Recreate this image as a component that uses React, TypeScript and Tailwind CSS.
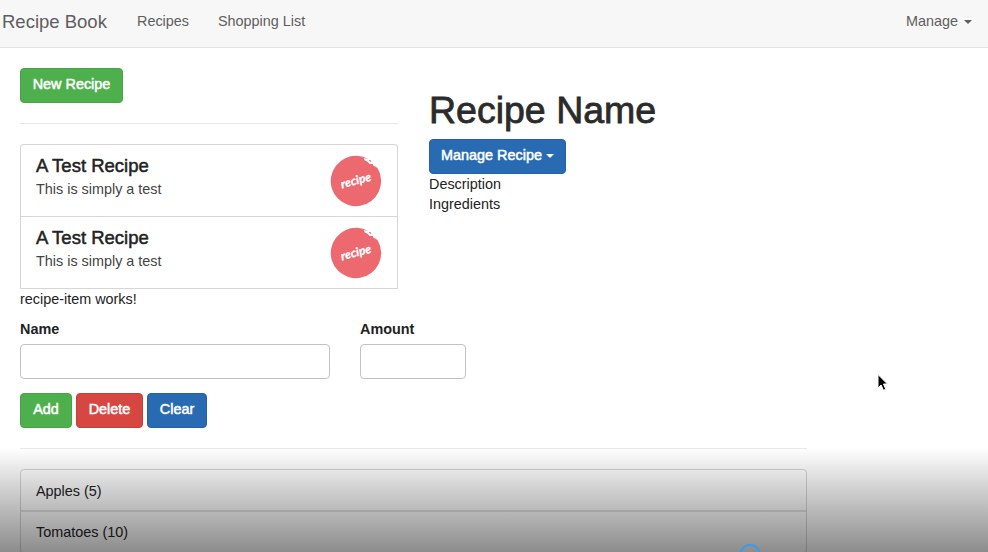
import React from "react";

function Caret({ className = "" }: { className?: string }) {
  return (
    <span
      className={`inline-block h-0 w-0 border-x-4 border-t-4 border-x-transparent border-t-current ${className}`}
    />
  );
}

function Button({ className = "", children }: { className?: string; children: React.ReactNode }) {
  return (
    <button
      className={`flex h-[35px] items-center justify-center rounded border pb-px text-[14.4px] text-white [-webkit-text-stroke:0.5px_white] ${className}`}
    >
      {children}
    </button>
  );
}

function RecipeLogo() {
  return (
    <svg className="mt-2.5 mr-[15px] h-[52px] w-[52px] shrink-0" viewBox="0 0 52 52">
      <path
        d="M38.5 4.2 A25.2 25.2 0 1 0 47.8 13.5 L45.8 11.8 L43.6 11 L42.7 9 L39.7 8.9 L37.5 6.7 L34.5 5.2 L34 3 Z"
        fill="#ed6970"
      />
      <path d="M39.3 5.2l1.8 1.3" stroke="#ed6970" strokeWidth="1.4" />
      <text
        x="26"
        y="29.5"
        textAnchor="middle"
        transform="rotate(-15 26 26)"
        fill="white"
        stroke="white"
        strokeWidth="0.3"
        fontFamily="Lato, sans-serif"
        fontStyle="italic"
        fontWeight="700"
        fontSize="12"
        textLength="31"
      >
        recipe
      </text>
    </svg>
  );
}

function RecipeItem() {
  return (
    <a className="flex h-[72px] justify-between border-b border-[#d6d6d6] pl-[15px]">
      <div className="pt-[9px]">
        <h4 className="text-[18.5px] leading-[24px] text-[#222] [-webkit-text-stroke:0.5px_#222]">A Test Recipe</h4>
        <p className="mt-px text-[14.4px] leading-[21px] text-[#444]">This is simply a test</p>
      </div>
      <RecipeLogo />
    </a>
  );
}

export default function App() {
  return (
    <div className="relative h-[552px] w-[988px] overflow-hidden bg-white font-['Liberation_Sans',Arial,sans-serif] text-[14.4px] text-[#222]">
      <nav className="flex h-12 items-center border-b border-[#e3e3e3] bg-[#f7f7f7] pb-[3px] text-[#5e5e5e]">
        <span className="ml-[2px] w-[135px] text-[18.5px]">Recipe Book</span>
        <span className="w-[81px]">Recipes</span>
        <span>Shopping List</span>
        <span className="mr-4 ml-auto flex items-center">
          Manage
          <Caret className="ml-1.5" />
        </span>
      </nav>

      <main className="flex pl-5">
        <section className="w-[378px] pt-5">
          <Button className="w-[103px] border-[#47a447] bg-[#4eb04c]">New Recipe</Button>
          <hr className="mt-5 mb-5 border-[#e8e8e8]" />
          <div className="rounded-t border border-b-0 border-[#d6d6d6]">
            <RecipeItem />
            <RecipeItem />
          </div>
          <p className="leading-[20px]">recipe-item works!</p>
        </section>
        <section className="ml-[31px] pt-[41px]">
          <h1 className="text-[37.5px] leading-[42px] text-[#2b2b2b] [-webkit-text-stroke:0.8px_#2b2b2b]">Recipe Name</h1>
          <Button className="mt-2 w-[137px] border-[#2561a3] bg-[#286bb3]">
            Manage Recipe
            <Caret className="ml-1" />
          </Button>
          <p className="leading-[20px]">Description</p>
          <p className="leading-[20px]">Ingredients</p>
        </section>
      </main>

      <form className="ml-5 w-[787px] pt-2.5">
        <div className="flex gap-[30px] font-bold">
          <label className="block w-[310px] leading-[20px]">
            Name
            <input className="mt-[5px] block h-[35px] w-full rounded border border-[#c2c2c2] bg-white" />
          </label>
          <label className="block w-[106px] leading-[20px]">
            Amount
            <input className="mt-[5px] block h-[35px] w-full rounded border border-[#c2c2c2] bg-white" />
          </label>
        </div>
        <div className="mt-[14px] flex gap-1">
          <Button className="w-[52px] border-[#47a447] bg-[#4eb04c]">Add</Button>
          <Button className="w-[67px] border-[#c4403c] bg-[#d64742]">Delete</Button>
          <Button className="w-[60px] border-[#2561a3] bg-[#286bb3]">Clear</Button>
        </div>
        <hr className="mt-5 mb-5 border-[#e8e8e8]" />
        <ul className="rounded border border-[#d6d6d6]">
          <li className="h-[42px] border-b-2 border-[#e2e2e2] pl-[15px] leading-[42px]">Apples (5)</li>
          <li className="h-[41px] pl-[15px] leading-[41px]">Tomatoes (10)</li>
        </ul>
      </form>

      <div className="absolute inset-x-0 bottom-0 h-[104px] bg-linear-to-b from-black/0 via-black/23 to-black/45" />
      <div className="absolute top-[544px] left-[739px] h-[22px] w-[22px] rounded-full border-2 border-[#3f9ae5]" />
      <svg className="absolute top-[373px] left-[876px] h-[19px] w-[13px]" viewBox="0 0 13 19">
        <path
          d="M2 1.5V15L5.1 12L7.4 17.3L9.8 16.2L7.5 11H11.5Z"
          fill="black"
          stroke="white"
          strokeWidth="1"
        />
      </svg>
    </div>
  );
}
